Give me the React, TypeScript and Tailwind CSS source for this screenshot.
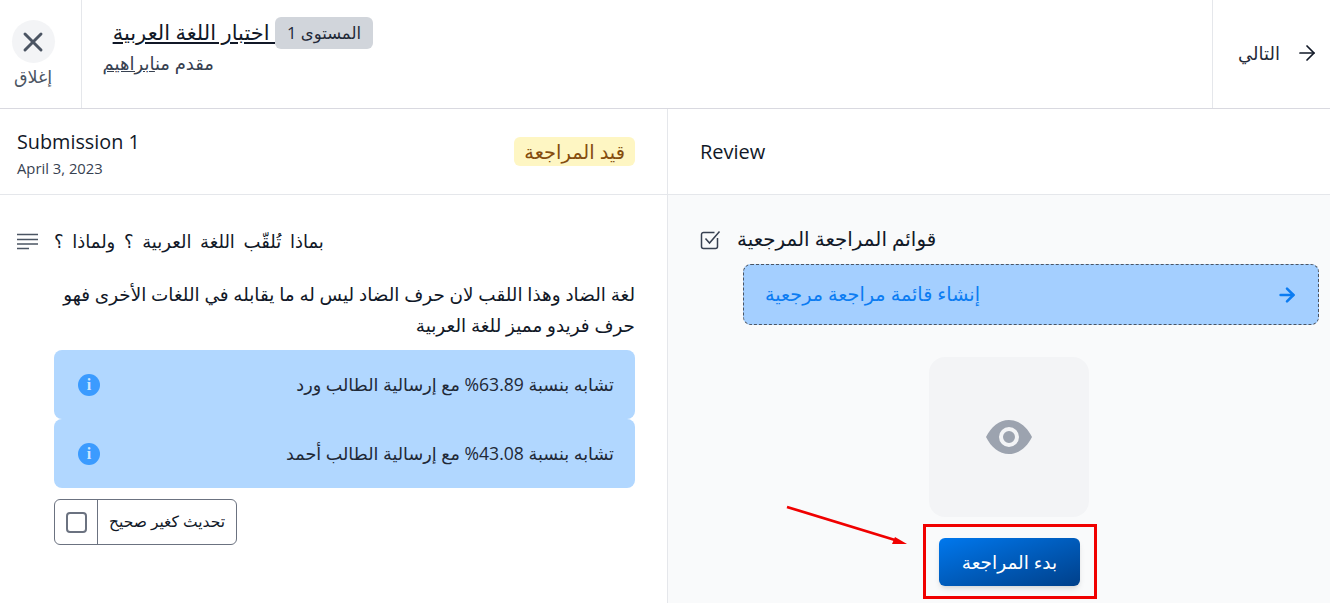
import React from "react";
import { ArrowRight, X } from "lucide-react";

function SimilarityAlert({ text }: { text: string }) {
  return (
    <div dir="rtl" className="flex h-[69px] items-center justify-between rounded-lg bg-[#b1d7ff] pl-[24px] pr-[21px] text-[17.6px] text-[#1f2937]">
      <span>{text}</span>
      <span className="flex h-[22px] w-[22px] items-center justify-center rounded-full bg-[#3b9bff]">
        <span className="text-[16px] font-bold leading-none text-[#cfe6ff] font-['Liberation_Serif',serif]">i</span>
      </span>
    </div>
  );
}

export default function App() {
  return (
    <div className="relative h-[603px] w-[1330px] overflow-hidden bg-white font-['Open_Sans','DejaVu_Sans',sans-serif] text-[#111827]">
      <header className="flex h-[109px] border-b border-[#d9d9e0]">
        <button className="flex w-[82px] flex-col items-center border-r border-[#e5e7eb] pr-[15px] pt-5">
          <span className="flex h-[43px] w-[43px] items-center justify-center rounded-full bg-[#f3f4f6]">
            <X size={32} strokeWidth={2.2} className="text-[#4b5563]" />
          </span>
          <span className="mt-[3px] text-[17.5px] leading-[20px] text-[#4b5563]">إغلاق</span>
        </button>
        <div className="flex-1 pl-[21px] pt-[15px]">
          <div dir="rtl" className="ml-[11px] flex w-[259px] items-center">
            <span className="mt-[2px] flex h-8 w-[98px] shrink-0 items-center justify-center whitespace-nowrap rounded-md bg-[#d1d5db] text-[16.5px] text-[#1f2937]">المستوى 1</span>
            <a className="whitespace-pre text-[21px] leading-7 underline underline-offset-2">{" اختبار اللغة العربية"}</a>
          </div>
          <div dir="rtl" className="mt-[4px] w-[111px] whitespace-nowrap text-[18px] leading-5 text-[#374151]">
            مقدم من<a className="underline">ابراهيم</a>
          </div>
        </div>
        <button className="flex w-[118px] items-center justify-center gap-[15px] border-l border-[#e5e7eb] pb-[2px] pl-[14px]">
          <span className="text-[18px] text-[#1f2937]">التالي</span>
          <ArrowRight size={24} strokeWidth={1.7} />
        </button>
      </header>

      <div className="flex h-[494px]">
        <section className="w-[668px] border-r border-[#e5e7eb]">
          <div className="flex h-[86px] items-center justify-between border-b border-[#e5e7eb] pl-[17px] pr-[32px]">
            <div className="pt-[3px]">
              <div className="text-[19.8px] leading-[26px]">Submission 1</div>
              <div className="mt-[3px] text-[14.8px] leading-5 text-[#374151]">April 3, 2023</div>
            </div>
            <span className="flex h-[29px] items-center rounded-md bg-[#fef6c3] px-[10px] text-[19.4px] text-[#854d0e]">قيد المراجعة</span>
          </div>
          <div className="pl-[17px] pr-[32px]">
            <div className="mt-[34px] flex items-center gap-4">
              <svg width="21" height="17" viewBox="0 0 21 17" className="text-[#4b5563]">
                <path d="M0 1.5h21M0 6.5h21M0 11h21M0 15.5h12" stroke="currentColor" strokeWidth="1.4" fill="none" />
              </svg>
              <span dir="rtl" className="text-[18px] leading-6 [word-spacing:4px]">بماذا تُلقّب اللغة العربية ؟ ولماذا ؟</span>
            </div>
            <div className="ml-[37px]">
              <p dir="rtl" className="mt-[25px] text-[18.4px] leading-[31px] text-[#111827]">
                لغة الضاد وهذا اللقب لان حرف الضاد ليس له ما يقابله في اللغات الأخرى فهو حرف فريدو مميز للغة العربية
              </p>
              <div className="mt-[10px]">
                <SimilarityAlert text="تشابه بنسبة 63.89% مع إرسالية الطالب ورد" />
                <SimilarityAlert text="تشابه بنسبة 43.08% مع إرسالية الطالب أحمد" />
              </div>
              <label className="mt-[11px] flex h-[46px] w-[183px] items-center rounded-md border border-[#6b7280]">
                <span className="flex h-full w-[43px] items-center justify-center border-r border-[#6b7280]">
                  <span className="h-[21px] w-[21px] rounded-[4px] border-2 border-[#6b7280]" />
                </span>
                <span dir="rtl" className="flex-1 text-center text-[15.5px]">تحديث كغير صحيح</span>
              </label>
            </div>
          </div>
        </section>

        <section className="flex-1 bg-[#f9fafb]">
          <div className="flex h-[86px] items-center border-b border-[#e5e7eb] bg-white pl-8 text-[20px]">Review</div>
          <div className="pl-[32px] pr-[11px]">
            <div className="mt-[32px] flex h-6 items-center gap-4">
              <svg width="21" height="21" viewBox="0 0 21 21" fill="none" stroke="#374151" strokeWidth="1.5">
                <path d="M17.5 9v8.5a2 2 0 0 1-2 2h-12a2 2 0 0 1-2-2v-12a2 2 0 0 1 2-2h11" />
                <path d="M5.5 9.5l4 4.5L19.5 2.5" />
              </svg>
              <span dir="rtl" className="text-[19.9px]">قوائم المراجعة المرجعية</span>
            </div>
            <div className="ml-[43px] mt-[13px] flex h-[61px] items-center justify-between rounded-lg border border-dashed border-[#4b5563] bg-[#a4cfff] pl-[21px] pr-[20px] text-[#0b7cf2]">
              <span dir="rtl" className="text-[19.2px]">إنشاء قائمة مراجعة مرجعية</span>
              <ArrowRight size={22} strokeWidth={2.8} />
            </div>
            <div className="mt-[32px] flex flex-col items-center">
              <div className="mr-[2px] flex h-[160px] w-[160px] items-center justify-center rounded-2xl bg-[#f3f4f6]">
                <svg width="46" height="34" viewBox="0 0 46 34" fill="#9ca3af">
                  <path fillRule="evenodd" d="M23 0c10 0 18 7 23 17-5 10-13 17-23 17S5 27 0 17C5 7 13 0 23 0Zm0 7a10 10 0 1 0 0 20 10 10 0 0 0 0-20Zm0 4a6 6 0 1 1 0 12 6 6 0 0 1 0-12Z" />
                </svg>
              </div>
              <button dir="rtl" className="mt-[21px] h-12 w-[141px] rounded-md bg-gradient-to-br from-[#0078ee] to-[#00408a] text-[18.5px] text-white shadow-md">
                بدء المراجعة
              </button>
            </div>
          </div>
        </section>
      </div>

      {/* red annotation drawn over the page */}
      <div className="absolute left-[923px] top-[524px] h-[75px] w-[174px] border-[3px] border-[#f00000]" />
      <svg className="absolute left-[780px] top-[500px]" width="135" height="50" viewBox="0 0 135 50">
        <path d="M7 7 L115 40" stroke="#f00000" strokeWidth="2.8" fill="none" />
        <path d="M115 37 L112 44 L127 44 Z" fill="#f00000" />
      </svg>
    </div>
  );
}
